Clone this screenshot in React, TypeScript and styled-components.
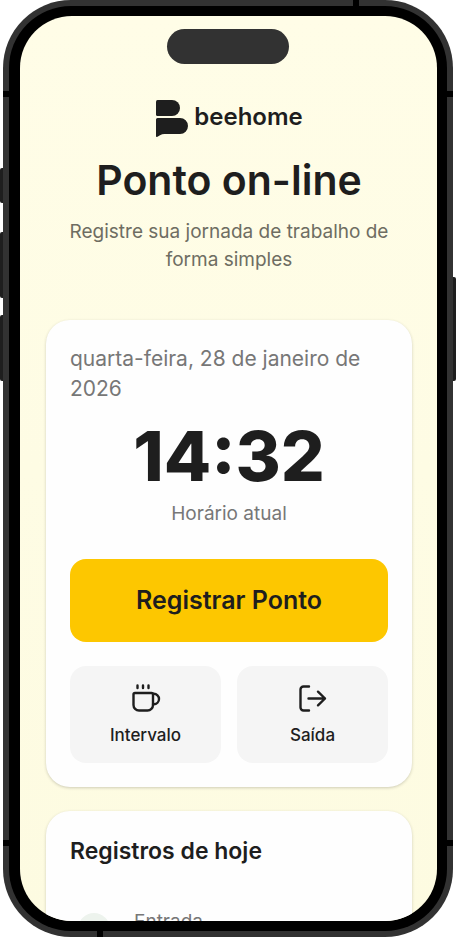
import React from "react";
import styled, { createGlobalStyle } from "styled-components";

const GlobalStyle = createGlobalStyle`
  *, *::before, *::after { box-sizing: border-box; }
  body {
    margin: 0;
    background: #fff;
    color: #1e1e1e;
    font-family: Inter, "Liberation Sans", sans-serif;
  }
  h1, h2, p { margin: 0; }
  button { font: inherit; color: inherit; border: 0; cursor: pointer; }
`;

const Phone = styled.div`
  position: relative;
  display: flex;
  height: calc(100vh - 1px);
  margin: 0 3px;
  padding: 6px;
  border-radius: 68px;
  background: #323232;
`;

const SideKey = styled.span<{ $side: "left" | "right"; $top: number; $length: number }>`
  position: absolute;
  ${(p) => p.$side}: -3px;
  top: ${(p) => p.$top}px;
  width: 3px;
  height: ${(p) => p.$length}px;
  background: #1e1e1e;
  border-radius: ${(p) => (p.$side === "left" ? "2px 0 0 2px" : "0 2px 2px 0")};
`;

const AntennaBand = styled.span<{ $edge: "left" | "right" | "top" | "bottom"; $from: "top" | "bottom" | "left" | "right"; $offset: number }>`
  position: absolute;
  ${(p) => p.$edge}: 0;
  ${(p) => p.$from}: ${(p) => p.$offset}px;
  width: 6px;
  height: 6px;
  background: #000;
`;

const Bezel = styled.div`
  flex: 1;
  display: flex;
  min-width: 0;
  padding: 10px 10px 10px 11px;
  border-radius: 62px;
  background: #000;
`;

const Screen = styled.main`
  position: relative;
  flex: 1;
  min-width: 0;
  overflow: hidden;
  border-radius: 52px;
  padding: 84px 25px 0 26px;
  background: linear-gradient(#fffde7, #fdfbe1);
`;

const Island = styled.div`
  position: absolute;
  top: 13px;
  left: 50%;
  width: 122px;
  height: 35px;
  margin-left: -62px;
  border-radius: 18px;
  background: #323232;
`;

const Header = styled.header`
  display: flex;
  flex-direction: column;
  align-items: center;
  margin-bottom: 46px;
  text-align: center;
`;

const Brand = styled.div`
  display: flex;
  align-items: center;
  gap: 6px;
  height: 37px;
  margin-bottom: 18px;
`;

const BrandName = styled.span`
  padding-bottom: 4px;
  font-size: 24px;
  font-weight: 600;
  line-height: 32px;
`;

const Title = styled.h1`
  margin-bottom: 13px;
  font-size: 41px;
  font-weight: 600;
  line-height: 50px;
`;

const Subtitle = styled.p`
  padding: 0 20px;
  color: #6e6d62;
  font-size: 19px;
  line-height: 28px;
`;

const Card = styled.section`
  margin-bottom: 24px;
  padding: 24px;
  border-radius: 24px;
  background: #fefefe;
  box-shadow: 0 1px 3px rgba(60, 60, 40, 0.24);
`;

const DateText = styled.p`
  margin-bottom: 16px;
  color: #777;
  font-size: 21px;
  line-height: 30px;
`;

const Clock = styled.p`
  margin-bottom: 8px;
  font-size: 69px;
  font-weight: 800;
  line-height: 72px;
  text-align: center;
`;

const ClockLabel = styled.p`
  margin-bottom: 32px;
  color: #777;
  font-size: 19px;
  line-height: 27px;
  text-align: center;
`;

const PrimaryButton = styled.button`
  display: block;
  width: 100%;
  margin-bottom: 24px;
  padding: 24px;
  border-radius: 16px;
  background: #fdc700;
  && { font-size: 25px; font-weight: 600; line-height: 35px; }
`;

const Actions = styled.div`
  display: grid;
  grid-template-columns: 1fr 1fr;
  gap: 16px;
`;

const ActionButton = styled.button`
  display: flex;
  flex-direction: column;
  align-items: center;
  gap: 7px;
  padding: 17px 12px 14px;
  border-radius: 16px;
  background: #f5f5f5;
  && { font-size: 17px; font-weight: 500; line-height: 27px; }
`;

const SectionTitle = styled.h2`
  margin-bottom: 42px;
  font-size: 23px;
  font-weight: 600;
  line-height: 32px;
`;

const Entry = styled.div`
  display: flex;
  align-items: flex-start;
  gap: 24px;
  padding-left: 8px;
`;

const EntryMark = styled.span`
  flex: none;
  width: 32px;
  height: 32px;
  margin-top: 4px;
  border-radius: 50%;
  background: #edf3ed;
`;

const EntryLabel = styled.span`
  color: #777;
  font-size: 19px;
  line-height: 26px;
`;

const BeeMark = () => (
  <svg width="33" height="37" viewBox="0 0 33 37" fill="#1e1e1e" aria-hidden="true">
    <path d="M2.5 0H17a8 8 0 0 1 0 16H2.5Q1 16 1 14.500V2Q1 0 2.500 0Z" />
    <path d="M2.500 18H25a8 8 0 0 1 0 16H9.500Q7 34 5 35.200L2 36.900Q1 37.200 1 36V19.500Q1 18 2.500 18Z" />
  </svg>
);

const CupIcon = () => (
  <svg width="32" height="32" viewBox="0 0 32 32" fill="none" stroke="#1e1e1e" strokeWidth="2.4" strokeLinecap="round" strokeLinejoin="round" aria-hidden="true">
    <path d="M7.500 2.500v2.500M13 2.500v2.500M18.500 2.500v2.500" />
    <path d="M5 10H21.500Q23 10 23 11.500V22a5.500 5.500 0 0 1-5.500 5.500H9a5.500 5.500 0 0 1-5.500-5.500V11.500Q3.500 10 5 10Z" />
    <path d="M23 10.800h.8a5.200 5.200 0 0 1 0 10.400H23" />
  </svg>
);

const ExitIcon = () => (
  <svg width="32" height="32" viewBox="0 0 32 32" fill="none" stroke="#1e1e1e" strokeWidth="2.4" strokeLinecap="round" strokeLinejoin="round" aria-hidden="true">
    <path d="M12 3.500H6.500A3 3 0 0 0 3.500 6.500v18a3 3 0 0 0 3 3H12" />
    <path d="M11.500 15.500H28M21 8.700L28 15.500l-7 6.800" />
  </svg>
);

export default function App() {
  return (
    <>
      <GlobalStyle />
      <Phone>
        <SideKey $side="left" $top={168} $length={35} />
        <SideKey $side="left" $top={232} $length={66} />
        <SideKey $side="left" $top={315} $length={66} />
        <SideKey $side="right" $top={277} $length={104} />
        <AntennaBand $edge="top" $from="right" $offset={94} />
        <AntennaBand $edge="bottom" $from="left" $offset={94} />
        <AntennaBand $edge="left" $from="top" $offset={91} />
        <AntennaBand $edge="right" $from="top" $offset={91} />
        <AntennaBand $edge="left" $from="bottom" $offset={91} />
        <AntennaBand $edge="right" $from="bottom" $offset={91} />
        <Bezel>
          <Screen>
            <Island />
            <Header>
              <Brand>
                <BeeMark />
                <BrandName>beehome</BrandName>
              </Brand>
              <Title>Ponto on-line</Title>
              <Subtitle>Registre sua jornada de trabalho de forma simples</Subtitle>
            </Header>
            <Card>
              <DateText>quarta-feira, 28 de janeiro de 2026</DateText>
              <Clock>14:32</Clock>
              <ClockLabel>Horário atual</ClockLabel>
              <PrimaryButton type="button">Registrar Ponto</PrimaryButton>
              <Actions>
                <ActionButton type="button">
                  <CupIcon />
                  Intervalo
                </ActionButton>
                <ActionButton type="button">
                  <ExitIcon />
                  Saída
                </ActionButton>
              </Actions>
            </Card>
            <Card>
              <SectionTitle>Registros de hoje</SectionTitle>
              <Entry>
                <EntryMark />
                <EntryLabel>Entrada</EntryLabel>
              </Entry>
            </Card>
          </Screen>
        </Bezel>
      </Phone>
    </>
  );
}
